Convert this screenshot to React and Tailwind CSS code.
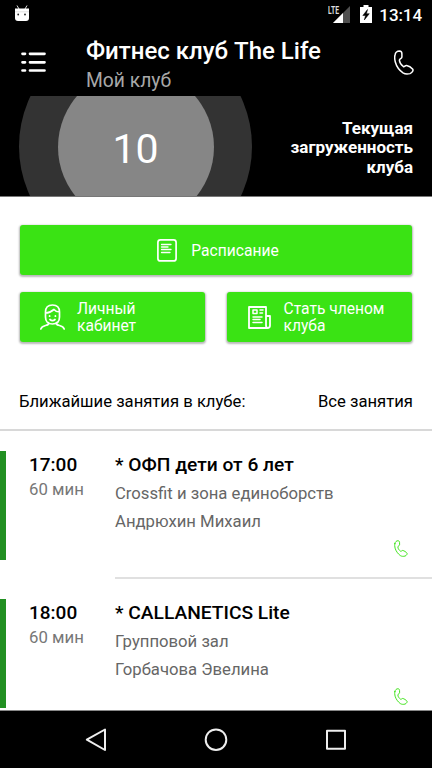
import React from "react";

function PhoneIcon({ className, width }) {
  return (
    <svg viewBox="0 0 20 25" className={className} fill="none" stroke="currentColor" strokeWidth={width} strokeLinejoin="round" strokeLinecap="round">
      <path d="M1 5C1.500 2.500 3.500 1.100 5.500 1.100C7.200 1.200 7.900 2.300 7.900 3.800V7C7.900 8.600 5.300 8.600 5.400 10.300C5.500 12.800 7.300 15 9.300 16.500C10.600 17.200 11 15.200 12.600 15.400C14.600 15.700 17.600 17.800 18.800 19.300C19.600 20.600 18 22.900 16 23.600C13.600 24.300 11 24.200 9 22.900C5.600 20.500 2.400 16 1.300 12C.6 9.300.5 7 1 5Z" />
    </svg>
  );
}

function StatusBar() {
  return (
    <div className="flex h-[29px] items-start pt-[5px] pl-[14px] pr-[10px]">
      <svg viewBox="0 0 16 18" className="h-[18px] w-[16px]">
        <path d="M3 .5l2 3.500M13 .5l-2 3.500" stroke="#ddd" strokeWidth="1" />
        <path d="M1 3.500H15V13Q15 16 12 16H4Q1 16 1 13Z" fill="#fff" />
        <path d="M1 6.800H15" stroke="#ccc" strokeWidth=".6" />
        <circle cx="4.200" cy="9.500" r=".9" fill="#222" />
        <circle cx="11" cy="9.500" r=".9" fill="#222" />
      </svg>
      <div className="ml-[298px] flex">
        <span className="mt-px h-[10px] w-[11px] origin-left scale-x-[.68] text-[10px] leading-[10px] font-bold text-[#ddd]">LTE</span>
        <svg viewBox="0 0 18 18" className="-ml-[6px] h-[18px] w-[18px]">
          <path d="M0 18L17 1V18Z" fill="#505050" />
          <path d="M0 18L10 8V18Z" fill="#fff" />
        </svg>
      </div>
      <svg viewBox="0 0 12 18" className="ml-[9px] h-[18px] w-[12px]">
        <path d="M0 2H3.500V0H8.500V2H12V18H0Z" fill="#fff" />
        <path d="M7.500 4.500L2.800 10.500H5.500L4.300 15L9.300 8.700H6.500Z" fill="#000" stroke="#000" strokeWidth=".5" />
      </svg>
      <span className="ml-auto text-[17px] leading-[20px] font-medium tracking-[-0.1px] text-white">13:14</span>
    </div>
  );
}

function Header() {
  return (
    <header className="flex h-[67px] pl-[21px] pr-[18px]">
      <svg viewBox="0 0 26 22" className="mt-[22px] h-[22px] w-[26px] shrink-0" stroke="#fff" strokeWidth="2.700" strokeLinecap="round">
        <path d="M1.500 2.800H4M9 2.800H23.500M1.500 11.300H4M9 11.300H23.500M1.500 19.500H4M9 19.500H23.500" />
      </svg>
      <div className="ml-[39px] pt-[8px]">
        <h1 className="text-[24px] leading-[28px] font-medium whitespace-nowrap text-white">Фитнес клуб The Life</h1>
        <p className="pt-[2px] text-[19.300px] leading-[28px] text-[#a8a8a8]">Мой клуб</p>
      </div>
      <PhoneIcon width="1.500" className="mt-[21px] ml-auto h-[25px] w-[20px] text-white" />
    </header>
  );
}

function Load() {
  return (
    <section className="flex h-[101px] items-start justify-between overflow-hidden border-b border-[#777] pr-[19px] pl-[19px]">
      <div className="-mt-[66px] flex h-[233px] w-[233px] shrink-0 items-center justify-center rounded-full bg-[#333]">
        <div className="flex h-[156px] w-[156px] items-center justify-center rounded-full bg-[#868686]">
          <span className="pt-[4px] text-[41px] leading-[48px] text-white">10</span>
        </div>
      </div>
      <p className="pt-[22.500px] text-right text-[17px] leading-[19.500px] font-bold text-white">
        Текущая<br />загруженность<br />клуба
      </p>
    </section>
  );
}

const button = "flex items-center rounded-[3px] bg-[#3ae314] text-[15.600px] leading-[17px] text-white shadow-[0_1px_2px_1px_rgba(0,0,0,0.28)]";

function Actions() {
  return (
    <section className="flex flex-col gap-[17px] px-[20px] pt-[28px]">
      <button className={`${button} h-[50px] justify-center pl-[4px]`}>
        <svg viewBox="0 0 20 23" className="h-[23px] w-[20px]" fill="none" stroke="currentColor" strokeWidth="1.700" strokeLinecap="round">
          <rect x=".9" y=".9" width="18.200" height="21" rx="2.500" />
          <path d="M4.500 5.500H14M4.500 8H11M4.500 10.500H14M4.500 13.500H13" strokeWidth="1.300" />
        </svg>
        <span className="ml-[14px] pt-[2px]">Расписание</span>
      </button>
      <div className="flex gap-[22px]">
        <button className={`${button} h-[50px] flex-1 pl-[20px] text-left`}>
          <svg viewBox="0 0 25 26" className="h-[26px] w-[25px]" fill="none" stroke="currentColor" strokeWidth="1.700" strokeLinecap="round" strokeLinejoin="round">
            <path d="M5.500 12V8Q5.500 1 12.500 1Q19.500 1 19.500 8V13Q19.500 20 12.500 20Q5.500 20 5.500 13V9Q10 9 14 5.500Q16 8 19.500 8" />
            <path d="M8.500 18.500V20Q8 21 5.500 21.500Q1.500 22.500.8 25M16.500 18.500V20Q17 21 19.500 21.500Q23.500 22.500 24.200 25M10 15.500Q12.500 17.800 15 15.500" />
            <path d="M9.600 12V12.200M15.400 12V12.200" strokeWidth="1.800" />
          </svg>
          <span className="ml-[12px] pt-[2px]">Личный<br />кабинет</span>
        </button>
        <button className={`${button} h-[50px] flex-1 pl-[21px] text-left`}>
          <svg viewBox="0 0 23 23" className="h-[23px] w-[23px]" fill="none" stroke="currentColor" strokeWidth="1.800" strokeLinecap="round" strokeLinejoin="round">
            <path d="M18 19V1H1V22H19.500Q22 22 22 19.500V10H18V19.500Q18 22 20 22" />
            <path d="M5 4H9V7.500H5ZM12 4H15M12 7H14.500M5 11H14M5 13.500H12M5 16.500H14" strokeWidth="1.500" />
          </svg>
          <span className="ml-[13px] pt-[2px]">Стать членом<br />клуба</span>
        </button>
      </div>
    </section>
  );
}

const duration = "60 мин";

const lessons = [
  { time: "17:00", title: "* ОФП дети от 6 лет", room: "Crossfit и зона единоборств", coach: "Андрюхин Михаил" },
  { time: "18:00", title: "* CALLANETICS Lite", room: "Групповой зал", coach: "Горбачова Эвелина" },
];

function Lesson({ time, title, room, coach }) {
  return (
    <li className="flex h-[148px] items-start pt-[20px]">
      <div className="h-[109px] w-[6px] bg-[#229022]" />
      <div className="w-[109px] pl-[23px]">
        <p className="pt-[3px] text-[19px] leading-[22px] font-medium">{time}</p>
        <p className="pt-[3px] text-[16.800px] leading-[20px] text-[#777]">{duration}</p>
      </div>
      <div className="h-[128px] flex-1 border-b-2 border-[#e0e0e0] text-[16.700px] text-[#666]">
        <p className="pt-[3px] text-[19.200px] leading-[22px] font-medium text-black">{title}</p>
        <p className="pt-[4px] leading-[28px]">{room}</p>
        <p className="leading-[28px]">{coach}</p>
        <PhoneIcon width="1.400" className="mt-[4px] mr-[24px] ml-auto h-[17px] w-[14px] text-[#3ae314]" />
      </div>
    </li>
  );
}

function NavBar() {
  return (
    <nav className="flex h-[58px] items-center justify-center gap-[96px] border-t border-[#888] bg-black">
      <svg viewBox="0 0 24 24" className="h-[24px] w-[24px]" fill="none" stroke="#eee" strokeWidth="2" strokeLinejoin="round">
        <path d="M21 1.500V22L2.800 11.700Z" />
      </svg>
      <svg viewBox="0 0 24 24" className="h-[24px] w-[24px]" fill="none" stroke="#eee" strokeWidth="2">
        <circle cx="12" cy="11.700" r="10.300" />
      </svg>
      <svg viewBox="0 0 24 24" className="h-[24px] w-[24px]" fill="none" stroke="#eee" strokeWidth="2" strokeLinejoin="round">
        <rect x="3" y="2.700" width="18" height="18" />
      </svg>
    </nav>
  );
}

export default function App() {
  return (
    <div className="flex h-[768px] w-[432px] flex-col overflow-hidden bg-white font-['Roboto',sans-serif] text-black">
      <div className="shrink-0 bg-black">
        <StatusBar />
        <Header />
        <Load />
      </div>
      <main className="h-[513px] shrink-0 overflow-hidden">
        <Actions />
        <div className="flex h-[89px] items-end justify-between border-b-2 border-[#d8d8d8] px-[19px] pb-[16px] text-[16.650px] leading-[22px]">
          <h2>Ближайшие занятия в клубе:</h2>
          <span>Все занятия</span>
        </div>
        <ul>
          {lessons.map((lesson) => (
            <Lesson key={lesson.time} {...lesson} />
          ))}
        </ul>
      </main>
      <NavBar />
    </div>
  );
}
